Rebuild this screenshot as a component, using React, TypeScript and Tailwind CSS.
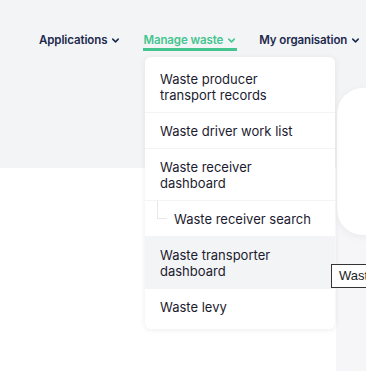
import React from "react";
import { ChevronDown } from "lucide-react";

const font = { fontFamily: "Inter, 'Noto Sans', sans-serif" };

function NavItem({ label, active }: { label: string; active?: boolean }) {
  return (
    <div className="relative flex shrink-0 items-center gap-[3px] whitespace-nowrap">
      <span
        className={
          active
            ? "text-[11.5px] font-semibold tracking-[-0.1px] text-[#44c58f] leading-[16px]"
            : "text-[11.5px] font-semibold tracking-[-0.1px] text-[#1c2a4d] leading-[16px]"
        }
      >
        {label}
      </span>
      <ChevronDown
        size={11}
        strokeWidth={3.2}
        className={active ? "text-[#44c58f]" : "text-[#1c2a4d]"}
      />
      {active && (
        <div className="absolute left-0 right-0 top-[16px] h-[3px] bg-[#44c58f]" />
      )}
    </div>
  );
}

function MenuItem({
  children,
  highlighted,
  last,
}: {
  children: React.ReactNode;
  highlighted?: boolean;
  last?: boolean;
}) {
  return (
    <div
      className={
        (highlighted ? "bg-[#f3f4f6] " : "bg-white ") +
        (last ? "" : "border-b border-[#f4f4f6] ") +
        "px-[15px] py-[9.5px] text-[13px] leading-[16px] text-[#1b1b2f]"
      }
    >
      {children}
    </div>
  );
}

export default function App() {
  return (
    <div className="relative w-[366px] h-[371px] overflow-hidden bg-white" style={font}>
      <div className="h-[168px] bg-[#f3f4f6]">
        <nav className="flex items-center gap-[22px] whitespace-nowrap pl-[39px] pt-[32px]">
          <NavItem label="Applications" />
          <NavItem label="Manage waste" active />
          <NavItem label="My organisation" />
        </nav>
      </div>
      <div className="flex h-[203px]">
        <div className="flex-1" />
        <div className="w-[30px] bg-[#f6f6f8]" />
      </div>

      {/* card behind the menu */}
      <div className="absolute left-[337px] top-[88px] w-[60px] h-[147px] rounded-l-[26px] bg-white shadow-[0_2px_8px_rgba(0,0,0,0.05)]" />

      {/* dropdown menu */}
      <div className="absolute left-[145px] top-[57px] w-[190px] rounded-[6px] bg-white pt-[4px] pb-[5px] shadow-[0_1px_6px_rgba(0,0,0,0.08)]">
        <MenuItem>
          Waste producer
          <br />
          transport records
        </MenuItem>
        <MenuItem>Waste driver work list</MenuItem>
        <MenuItem>
          Waste receiver
          <br />
          dashboard
        </MenuItem>
        <div className="relative border-b border-[#f4f4f6] py-[9.5px] pl-[29px] text-[13px] leading-[16px] text-[#1b1b2f]">
          <div className="absolute left-[12px] top-0 h-[18px] w-[10px] border-l border-b border-[#e8e8ec]" />
          Waste receiver search
        </div>
        <MenuItem highlighted>
          Waste transporter
          <br />
          dashboard
        </MenuItem>
        <MenuItem last>Waste levy</MenuItem>
      </div>

      {/* tooltip */}
      <div
        className="absolute left-[331px] top-[264px] h-[24px] w-[60px] whitespace-nowrap border border-[#333] bg-white pl-[7px] text-[13px] leading-[22px] text-[#222]"
        style={{ fontFamily: "'Liberation Sans', Arial, sans-serif" }}
      >
        Waste
      </div>
    </div>
  );
}
